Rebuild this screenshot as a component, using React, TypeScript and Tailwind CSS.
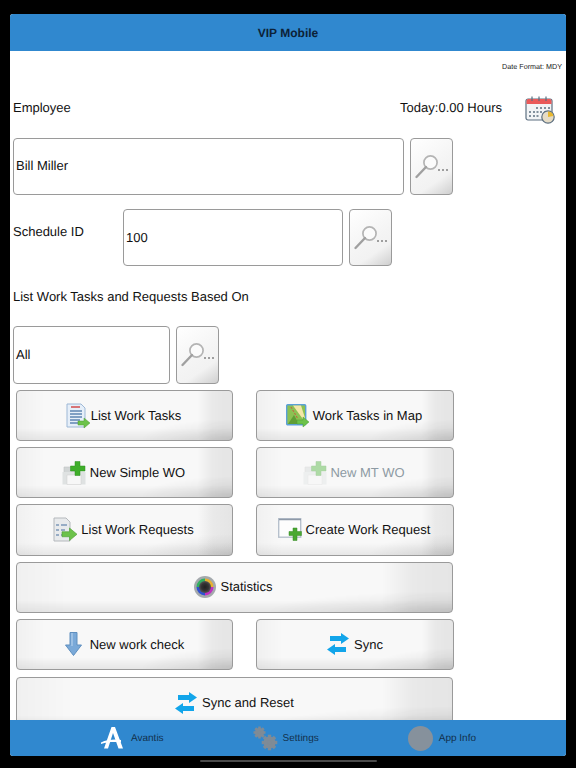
import React from "react";

const btnBg =
  "bg-[#f8f8f8] bg-[radial-gradient(ellipse_at_100%_100%,rgba(0,0,0,0.1)_0%,transparent_30%),linear-gradient(to_bottom,transparent_76%,rgba(0,0,0,0.07)_100%),linear-gradient(to_right,rgba(0,0,0,0.03)_0%,transparent_13%,transparent_84%,rgba(0,0,0,0.06)_91%,rgba(0,0,0,0.08)_100%)]";
const lookupBg =
  "bg-[#f6f6f6] bg-[linear-gradient(145deg,#ffffff_0%,#f4f4f4_55%,#f2f2f2_72%,#cfcfcf_100%)]";

function Lens() {
  return (
    <svg width="36" height="30" viewBox="0 0 36 30" fill="none">
      <circle cx="16.5" cy="10.5" r="6.6" fill="#fbfbfb" stroke="#b4b4b4" strokeWidth="1.7" />
      <path d="M12 15 L2.5 25" stroke="#a0a0a0" strokeWidth="2.4" strokeLinecap="round" />
      <circle cx="25" cy="18" r="0.8" fill="#333" />
      <circle cx="29" cy="18" r="0.8" fill="#333" />
      <circle cx="33" cy="18" r="0.8" fill="#333" />
    </svg>
  );
}

function LookupButton({ h = "h-[57px]" }: { h?: string }) {
  return (
    <div
      className={`${h} w-[43px] shrink-0 ml-[6px] flex items-center justify-center rounded-[4px] border border-[#9a9a9a] ${lookupBg}`}
    >
      <Lens />
    </div>
  );
}

function TextBox({ value, w, h = "h-[57px]", pb = "pb-[1px]" }: { value: string; w: string; h?: string; pb?: string }) {
  return (
    <div
      className={`${h} ${w} shrink-0 flex items-center pl-[2px] ${pb} rounded-[4px] border border-[#9a9a9a] bg-white text-[13px] text-[#111]`}
    >
      {value}
    </div>
  );
}

function Arrow({ x, y, s = 1 }: { x: number; y: number; s?: number }) {
  return (
    <path
      transform={`translate(${x} ${y}) scale(${s})`}
      d="M0 3 H6 V0 L12 5 L6 10 V7 H0 Z"
      fill="#6cc24a"
      stroke="#4f9e37"
      strokeWidth="0.5"
    />
  );
}

function ListTasksIcon() {
  return (
    <svg width="24" height="26" viewBox="0 0 24 26">
      <path d="M1 1 H15 L19 5 V24 H1 Z" fill="#e6eff9" stroke="#9db8d6" />
      <path d="M5 4 H14" stroke="#d04040" strokeWidth="1.4" />
      <path d="M4 8 H16 M4 11 H16 M4 14 H16 M4 17 H14 M4 20 H12" stroke="#5f86b3" strokeWidth="1.6" />
      <Arrow x={12} y={15} />
    </svg>
  );
}

function MapIcon() {
  return (
    <svg width="23" height="24" viewBox="0 0 23 24">
      <rect x="0.7" y="0.7" width="19" height="20" rx="1" fill="#8cc152" stroke="#5aa0d8" strokeWidth="1.4" />
      <path d="M7 1.5 H15 L19 14 V18 Z" fill="#f3e7a8" />
      <path d="M5 3 L12 15" stroke="#d05040" strokeWidth="1" strokeDasharray="2 1.5" />
      <path d="M2 20 L8 11 L13 20 Z" fill="#5f9e35" />
      <Arrow x={11} y={13} />
    </svg>
  );
}

function PrinterPlus({ faded = false }: { faded?: boolean }) {
  return (
    <svg width="24" height="24" viewBox="0 0 24 24" className={faded ? "opacity-40" : ""}>
      <path d="M2 6 H15 V12 H2 Z" fill="#d2d6d6" stroke="#c0c4c4" strokeWidth="0.6" />
      <path d="M0.5 11 H23.5 V23.5 H0.5 Z" fill="#dfe2e2" />
      <path d="M5 14 H19 V23.5 H5 Z" fill="#f7f7f7" stroke="#cfcfcf" strokeWidth="0.5" />
      <path d="M13 0.5 H18 V5 H23 V10 H18 V14.5 H13 V10 H8.5 V5 H13 Z" fill="#3fae2a" stroke="#2f8f20" strokeWidth="0.5" />
    </svg>
  );
}

function RequestsIcon() {
  return (
    <svg width="24" height="25" viewBox="0 0 24 25">
      <path d="M1 1 H13 L17 5 V24 H1 Z" fill="#e8eaec" stroke="#b4b8bc" />
      <path d="M3 8 H6 M8 8 H14 M3 13 H6 M8 13 H12 M3 18 H6 M8 18 H10" stroke="#7c98b8" strokeWidth="1.4" />
      <Arrow x={9} y={11} s={1.25} />
    </svg>
  );
}

function CreateIcon() {
  return (
    <svg width="24" height="23" viewBox="0 0 24 23">
      <rect x="0.7" y="0.7" width="22" height="18.5" fill="#fdfdfd" stroke="#b6c0cc" strokeWidth="1.4" />
      <path d="M1 1.5 H23" stroke="#8f9aa8" strokeWidth="1.5" />
      <path d="M15 10 H19 V13.5 H23.5 V17.5 H19 V22.5 H15 V17.5 H11 V13.5 H15 Z" fill="#4aa832" stroke="#378a24" strokeWidth="0.5" />
    </svg>
  );
}

function StatsIcon() {
  return (
    <svg width="22" height="22" viewBox="0 0 22 22">
      <defs>
        <radialGradient id="core">
          <stop offset="0%" stopColor="#222" />
          <stop offset="60%" stopColor="#333" />
          <stop offset="100%" stopColor="#555" />
        </radialGradient>
      </defs>
      <circle cx="11" cy="11" r="11" fill="#a4a9ad" />
      <path d="M11 2.5 A8.5 8.5 0 0 1 19.5 11 L11 11 Z" fill="#e8b030" />
      <path d="M19.5 11 A8.5 8.5 0 0 1 11 19.5 L11 11 Z" fill="#c030c0" />
      <path d="M11 19.5 A8.5 8.5 0 0 1 2.5 11 L11 11 Z" fill="#3050d0" />
      <path d="M2.5 11 A8.5 8.5 0 0 1 11 2.5 L11 11 Z" fill="#30b060" />
      <circle cx="11" cy="11" r="6" fill="url(#core)" />
    </svg>
  );
}

function DownIcon() {
  return (
    <svg width="17" height="24" viewBox="0 0 17 24">
      <path d="M5 0.5 H12 V13 H16.5 L8.5 23.5 L0.5 13 H5 Z" fill="#7aa9d8" stroke="#5f8fbf" />
      <path d="M7 1 V14" stroke="#a9c9e8" strokeWidth="1.5" />
    </svg>
  );
}

function SyncIcon() {
  return (
    <svg width="22" height="22" viewBox="0 0 22 22">
      <path d="M3 3 H14 V0 L22 5.5 L14 11 V8 H3 Z" fill="#12a5ea" />
      <path d="M8 11 L0 16.5 L8 22 V19 H19 V14 H8 Z" fill="#12a5ea" />
    </svg>
  );
}

function ActionButton({
  icon,
  label,
  w,
  gap = "gap-[4px]",
  dim = false,
  className = "pr-[2px]",
}: {
  icon: React.ReactNode;
  label: string;
  w: string;
  gap?: string;
  dim?: boolean;
  className?: string;
}) {
  return (
    <div
      className={`${w} h-[51.2px] shrink-0 flex items-center justify-center ${gap} rounded-[4px] border border-[#9a9a9a] text-[13px] ${btnBg} ${
        dim ? "text-[#8d9aa3]" : "text-[#111]"
      } ${className}`}
    >
      {icon}
      <span>{label}</span>
    </div>
  );
}

function CalendarIcon() {
  return (
    <svg width="30" height="28" viewBox="0 0 30 28">
      <rect x="1" y="3" width="26" height="21" rx="2" fill="#f2f4f6" stroke="#5c6f80" strokeWidth="1.2" />
      <path d="M1.5 5 a2 2 0 0 1 2 -2 H24.5 a2 2 0 0 1 2 2 V8 H1.5 Z" fill="#ea5a5a" />
      <path d="M7 0.5 V5 M14 0.5 V5 M21 0.5 V5" stroke="#5c6f80" strokeWidth="1.2" />
      <path
        d="M11 12 h2 M15 12 h2 M19 12 h2 M23 12 h2 M4 16 h2 M8 16 h2 M11.5 16 h2 M15 16 h2 M19 16 h2 M23 16 h2 M4 20 h2 M8 20 h2 M11.5 20 h2"
        stroke="#5c6f80"
        strokeWidth="1.7"
      />
      <circle cx="23" cy="21" r="6.2" fill="#e6dcc6" stroke="#5c6f80" strokeWidth="1.2" />
      <path d="M23 21 V15.5 A5.5 5.5 0 0 1 28.4 20 Z" fill="#e8b830" />
    </svg>
  );
}

function AvantisLogo() {
  return (
    <svg width="24" height="22" viewBox="0 0 24 22" fill="#fff">
      <path d="M10.5 0 H14 L22 21.5 H17.5 L12 6 L7 21.5 H3 Z" />
      <path d="M0 15.5 C6 12.5 14 12 20 13 V15.5 C13 14.5 7 15 0 17 Z" />
    </svg>
  );
}

function Gears() {
  const gear = (cx: number, cy: number, r: number) => {
    const teeth = [0, 45, 90, 135].map((a) => (
      <rect
        key={a}
        x={cx - r * 0.28}
        y={cy - r * 1.3}
        width={r * 0.56}
        height={r * 2.6}
        transform={`rotate(${a} ${cx} ${cy})`}
      />
    ));
    return (
      <g fill="#7f8b96">
        {teeth}
        <path
          fillRule="evenodd"
          d={`M${cx - r} ${cy} a${r} ${r} 0 1 0 ${2 * r} 0 a${r} ${r} 0 1 0 ${-2 * r} 0 Z M${cx - r * 0.4} ${cy} a${r * 0.4} ${r * 0.4} 0 1 0 ${r * 0.8} 0 a${r * 0.4} ${r * 0.4} 0 1 0 ${-r * 0.8} 0 Z`}
        />
      </g>
    );
  };
  return (
    <svg width="25" height="25" viewBox="0 0 25 25">
      {gear(6.5, 6.5, 4.6)}
      {gear(16.5, 16.5, 6)}
    </svg>
  );
}

function TabItem({ icon, label, gap }: { icon: React.ReactNode; label: string; gap: string }) {
  return (
    <div className={`flex items-center ${gap}`}>
      {icon}
      <span className="pt-[1px] text-[10px] text-[#12304c]">{label}</span>
    </div>
  );
}

export default function App() {
  return (
    <div
      className="h-[768px] w-[576px] bg-black pt-[14px] px-[10px] overflow-hidden flex flex-col [text-rendering:geometricPrecision]"
      style={{ fontFamily: '"Liberation Sans", Arial, sans-serif' }}
    >
      <div className="h-[742px] w-[556px] rounded-[3px] overflow-hidden flex flex-col bg-white">
        <header className="h-[36.5px] shrink-0 bg-[#3088cf] flex items-center justify-center pt-[1px] text-[12px] font-bold text-[#0c2238]">
          VIP Mobile
        </header>

        <main className="flex-1 min-h-0 overflow-hidden pl-[3px] flex flex-col">
          <div className="h-[33.5px] shrink-0 flex items-center justify-end pr-[4px] pt-[1px] text-[7.2px] text-[#222]">
            Date Format: MDY
          </div>

          <div className="h-[46px] shrink-0 flex items-center pt-[1px] text-[13px] text-[#111]">
            <span>Employee</span>
            <span className="ml-auto">Today:0.00 Hours</span>
            <span className="ml-[23px] mr-[11px] mt-[4px] flex">
              <CalendarIcon />
            </span>
          </div>

          <div className="mt-[8px] flex shrink-0">
            <TextBox value="Bill Miller" w="w-[391px]" />
            <LookupButton />
          </div>

          <div className="mt-[14px] flex shrink-0">
            <div className="w-[110px] shrink-0 pt-[13px] text-[13px] text-[#111]">Schedule ID</div>
            <TextBox value="100" w="w-[220px]" pb="pb-0" />
            <LookupButton />
          </div>

          <div className="h-[60px] shrink-0 flex items-center pt-[1px] text-[13px] text-[#111]">
            List Work Tasks and Requests Based On
          </div>

          <div className="flex shrink-0">
            <TextBox value="All" w="w-[157px]" h="h-[58px]" />
            <LookupButton h="h-[58px]" />
          </div>

          <div className="mt-[6px] pl-[3px] flex flex-col gap-[6px] shrink-0">
            <div className="flex gap-[23px]">
              <ActionButton w="w-[217px]" icon={<ListTasksIcon />} label="List Work Tasks" gap="gap-[1px]" />
              <ActionButton w="w-[198px]" icon={<MapIcon />} label="Work Tasks in Map" />
            </div>
            <div className="flex gap-[23px]">
              <ActionButton w="w-[217px]" icon={<PrinterPlus />} label="New Simple WO" />
              <ActionButton w="w-[198px]" icon={<PrinterPlus faded />} label="New MT WO" gap="gap-[3px]" dim />
            </div>
            <div className="flex gap-[23px]">
              <ActionButton w="w-[217px]" icon={<RequestsIcon />} label="List Work Requests" />
              <ActionButton w="w-[198px]" icon={<CreateIcon />} label="Create Work Request" />
            </div>
            <ActionButton w="w-[437px]" icon={<StatsIcon />} label="Statistics" />
            <div className="flex gap-[23px]">
              <ActionButton w="w-[217px]" icon={<DownIcon />} label="New work check" gap="gap-[8px]" className="" />
              <ActionButton w="w-[198px]" icon={<SyncIcon />} label="Sync" gap="gap-[5px]" className="" />
            </div>
            <ActionButton w="w-[437px]" icon={<SyncIcon />} label="Sync and Reset" gap="gap-[5px]" className="mt-[1px]" />
          </div>
        </main>

        <footer className="h-[36px] shrink-0 bg-[#3088cf] flex items-center justify-center gap-[89px] pl-[1px]">
          <TabItem icon={<AvantisLogo />} label="Avantis" gap="gap-[6px]" />
          <TabItem icon={<Gears />} label="Settings" gap="gap-[5px]" />
          <TabItem
            icon={<div className="h-[25px] w-[25px] rounded-full bg-[#86919c]" />}
            label="App Info"
            gap="gap-[6px]"
          />
        </footer>
      </div>
      <div className="mt-[4px] mx-auto h-[2px] w-[177px] shrink-0 rounded-full bg-[#4a4a4a]" />
    </div>
  );
}
